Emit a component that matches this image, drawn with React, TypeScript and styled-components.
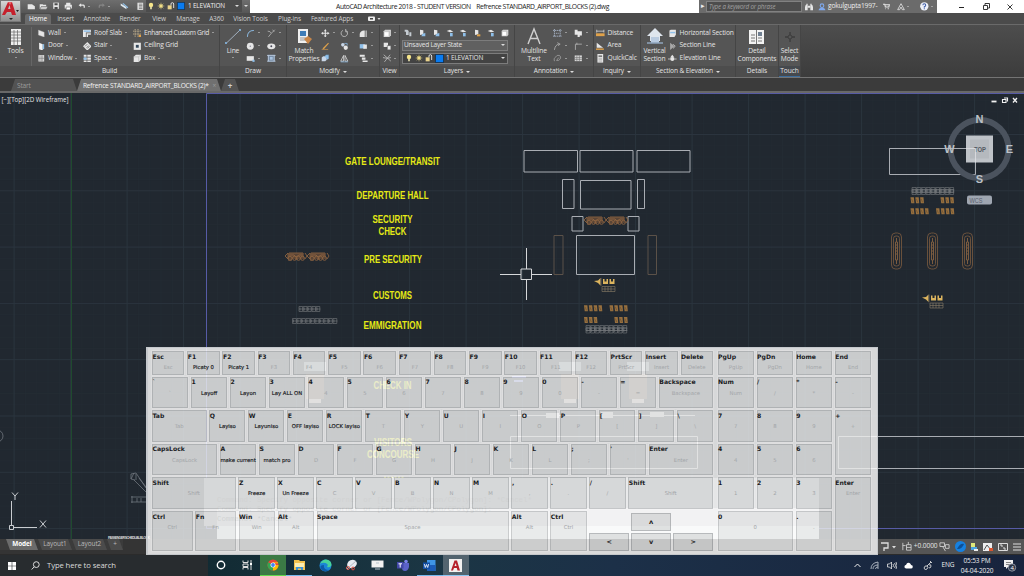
import React from "react";
import styled, { createGlobalStyle, css } from "styled-components";

const Global = createGlobalStyle`
  *{box-sizing:border-box}
  html,body{margin:0;padding:0;overflow:hidden;background:#212830}
  body{font-family:"Open Sans","Noto Sans",sans-serif;font-size:6.6px;color:#e4e4e4;line-height:1}
  svg{display:block;flex:none}
`;

/* ---------- icons ---------- */
const W = "#e6e6e6";
const B = "#8fc0ea";
const O = "#e0a24a";
const G = "#a8a8a8";
const glyphs: Record<string, React.ReactNode> = {
  new: <path d="M1 3h6l4 3v4H1z" fill={W} />,
  open: <><path d="M1 3h4l1 1h4v2H3l-2 4z" fill={W} /><path d="M3.5 6.5H12L10 10H1.5z" fill="#c9c9c9" /></>,
  save: <><path d="M2 1h9v10H2z" fill={W} /><path d="M4 2h5v3H4zM4 8h5v3H4z" fill="#4c4c4c" /></>,
  print: <><path d="M3 1h6v3H3zM1 4h10v5H1z" fill={W} /><path d="M3 7h6v4H3z" fill="#fff" stroke="#555" strokeWidth=".8" /></>,
  undo: <path d="M1 5l4-3v2h4q2 0 2 3v2H9V7q0-1-1-1H5v2z" fill={W} />,
  redo: <path d="M11 5L7 2v2H3Q1 4 1 7v2h2V7q0-1 1-1h3v2z" fill="#858585" />,
  sheets: <><path d="M1 2l8 5v3L1 5z" fill="#dfe8ee" /><path d="M4 2l7 6" stroke={B} strokeWidth="1.5" /></>,
  project: <><path d="M2 1h8v10H2z" fill={W} /><path d="M4 3h5M4 5h5M4 7h5M4 9h5" stroke="#666" /></>,
  bulb: <><circle cx="6" cy="4.5" r="3.3" fill="#f6e58a" /><path d="M4.7 7h2.6v4H4.7z" fill="#e4dca9" /></>,
  sun: <><circle cx="6" cy="6" r="2.6" fill="#f6e58a" /><path d="M6 1v10M1 6h10M2.5 2.5l7 7M9.5 2.5l-7 7" stroke="#f0dc86" strokeWidth=".8" /></>,
  lock: <><path d="M1 5h6v6H1z" fill="#e9d28b" /><path d="M6 5V3q0-2 2-2t2 2v6" fill="none" stroke={W} strokeWidth="1.4" /></>,
  blue: <path d="M.5.5h11v11H.5z" fill="#0a7bf0" stroke="#123" />,
  wall: <path d="M2 1.500l8 3v6.500L2 8.500z" fill={W} stroke="#bbb" strokeWidth=".5" />,
  door: <><path d="M3 1l5 2v9L3 10z" fill="#f4f4f4" /><path d="M8 3h2v7H8" fill={B} /></>,
  window: <><path d="M2 1.5h8v9H2z" fill={W} /><path d="M6 2v8M2 6h8M4 2v8M8 2v8" stroke="#777" strokeWidth=".8" /></>,
  roof: <><path d="M0 1h11v4H4v6H0z" fill="#e8e8e8" /><path d="M1 2h9v2H1z" fill={B} /><path d="M5 6h6v2H7v3H5z" fill={W} /></>,
  stair: <><path d="M6 0l6 6-6 6-6-6z" fill={W} /><path d="M3 6l3-3M5 8l3-3M6 9l3-3" stroke="#555" /></>,
  space: <><path d="M1 1h4v3H1zM1 5h4v3H1zM1 9h4v2H1zM6 1h5v3H6zM6 5h5v3H6zM6 9h5v2H6z" fill={W} /><path d="M1 5h4v3H1z" fill={B} /></>,
  grid: <><path d="M3 0v12M7 0v12M0 3h12M0 7h12" stroke="#d8c39a" strokeWidth="1" strokeDasharray="2 1" /><path d="M8 8h4v4H8z" fill={O} /></>,
  ceiling: <><path d="M1 1h10v10H1z" fill={W} /><path d="M4 4h4v4H4z" fill="#33485c" /></>,
  box: <><path d="M1 4l3-3h7v7l-3 3H1z" fill={W} /><path d="M8 4v7M8 4H1M8 4l3-3" stroke="#bbb" /></>,
  arc: <path d="M2 11Q2 2 11 2" fill="none" stroke={B} strokeWidth="1.3" />,
  trim: <path d="M1 3q4 0 5 3l-4 5M6 6l5-5M8 1l2 3" fill="none" stroke={G} strokeWidth="1.3" />,
  circle: <><circle cx="6" cy="6" r="4.8" fill={W} /><circle cx="6" cy="6" r="1" fill="#889" /></>,
  eye: <><ellipse cx="6" cy="6" rx="5.6" ry="4" fill={W} /><circle cx="6" cy="6" r="1.3" fill="#445" /></>,
  rect: <><path d="M1 3h10v6.500H1z" fill={W} /><path d="M9 8h3v3H9z" fill={B} /></>,
  hatch: <><path d="M1 1h10v10H1z" fill="#7288a0" /><path d="M2 2v8M10 2v8M0 2h12M0 10h12" stroke="#c9d7e8" /><path d="M4 4h4v4H4z" fill="#a9c3e0" /></>,
  move: <path d="M6 0l2 3H4zM6 12l2-3H4zM0 6l3-2v4zM12 6L9 4v4zM5.3 3h1.4v6H5.3zM3 5.3h6v1.4H3z" fill={W} />,
  erase: <><path d="M2 9l8-8 1 1-7 8z" fill={O} /><path d="M1 11h9" stroke={O} strokeWidth="1.2" /></>,
  copy: <><circle cx="4" cy="4" r="2.5" fill="#c9d7e8" /><circle cx="8" cy="8" r="3" fill={W} /><path d="M6 2h4v3" fill="none" stroke={B} /></>,
  cubes: <><path d="M1 5l2-2h5v5l-2 2H1z" fill="#c9d7e8" /><path d="M5 3l2-2h4v5L9 8" fill={B} stroke="#567" strokeWidth=".6" /></>,
  rotate: <path d="M8 2a4.500 4.500 0 11-4 0M8 0v4h3" fill="none" stroke="#b9b9b9" strokeWidth="1.3" />,
  fillet: <><path d="M1 11V7q1-5 6-5h1v9z" fill={W} /><path d="M9 2h2v9H9z" fill="#bbb" /></>,
  mirror: <><path d="M1 10L5 2v8zM7 10V2l4 8z" fill="none" stroke={W} /><path d="M1 11h10" stroke={B} /></>,
  stretch: <><path d="M1 3h7v6H1z" fill={B} /><path d="M6 3.500h5v6H6z" fill={W} /></>,
  array: <><path d="M1 1h7v3H1zM4 5h5v3H4zM5 9h7v2H5z" fill={W} /></>,
  view3d: <><path d="M1 3l2-2h8v8l-2 2H1z" fill="#dcdcdc" /><path d="M2.500 4.500h5v5h-5z" fill="#fff" /><path d="M9 3v8M1 3h8" stroke="#aaa" strokeWidth=".8" /></>,
  viewpair: <><path d="M1 1h6v6H1z" fill={W} /><path d="M6 5h5v6H6z" fill="#eee" stroke="#444" strokeWidth=".7" /></>,
  burst: <path d="M1 1l10 9M10 1L2 11M0 5l6 1M6 6l5-1" stroke="#c0c0c0" strokeWidth="1.100" />,
  lay1: <><path d="M1 1h4l2 2v6H3V4H1zM8 5h3v6H8z" fill="#c5ccd2" /></>,
  lay2: <><path d="M3 1l5 1v6l-5 1z" fill={W} /><path d="M7 7l4-1v5H5z" fill={B} /></>,
  lay3: <><path d="M1 3l5-2 5 3-5 1z" fill={W} /><path d="M6 6h4v5H6z" fill={B} /></>,
  lay4: <><path d="M3 1l5 1v6l-5 1z" fill={W} /><path d="M6 8h5v3H6z" fill={O} /></>,
  dim: <path d="M0 2h12M0 10h12M2 0v12M10 0v12M4 6h4" stroke="#a9b6c8" strokeWidth="1.2" strokeDasharray="2 .7" />,
  tag: <path d="M1 1h4v2h6v6H8v2H5V8H1z" fill={W} />,
  leader: <path d="M2 11Q3 4 8 3M6 1l4 2-3 2" fill="none" stroke={G} strokeWidth="1.3" />,
  corner: <path d="M2 11V3h9M4 1v3" fill="none" stroke={G} strokeWidth="1.3" />,
  cloud: <path d="M2 10q-2-4 2-6 1-3 5-2 3 2 1 5-2 3-5 2l3-4" fill="none" stroke={G} />,
  table: <><path d="M1 2h10v8H1z" fill="#d8d8d8" /><path d="M1 5h10M4 2v8M7.5 2v8M1 7.5h10" stroke="#666" strokeWidth=".8" /></>,
  dist: <><path d="M0 6h12v4H0z" fill={O} /><path d="M1 3h10" stroke={W} /><path d="M1 1v4M11 1v4" stroke={W} /></>,
  area: <><path d="M1 1l9 7H1z" fill={W} /><path d="M0 9h11v2H0z" fill={O} /></>,
  calc: <><path d="M2 0h8v12H2z" fill={W} /><path d="M3.500 2h5v2h-5z" fill="#666" /><path d="M3.500 6h5M3.500 8h5M3.500 10h5" stroke="#999" strokeWidth=".8" /></>,
  hsec: <><path d="M2 2l2-1h7v7l-2 3H2z" fill={W} /><path d="M3 5h7" stroke={B} strokeWidth="2" /></>,
  secline: <><path d="M3 1l6 5-6 5z" fill={G} /><path d="M7 3l3 3-3 3" fill="none" stroke={W} /></>,
  elev: <><path d="M0 7h12" stroke={W} /><circle cx="6" cy="7" r="2.800" fill={W} /><path d="M6 1l3 4H3z" fill={W} /></>,
  binoc: <><path d="M1 3h3v8H0V6zM8 3h3l1 3v5H8z" fill={W} /><path d="M4 4h4v3H4zM2 1h2v2H2zM8 1h2v2H8z" fill={W} /></>,
  user: <><circle cx="6" cy="4" r="2.700" fill="none" stroke="#7fa9ee" strokeWidth="1.600" /><path d="M1 11q0-4 5-4t5 4z" fill="#7fa9ee" /></>,
  cart: <path d="M0 2h3l1 5h6l1-4H4M4 10h1M8 10h2" fill="none" stroke={W} strokeWidth="1.800" />,
  a360: <path d="M6 1l5 9H8L6 6l-2 4H1z" fill="none" stroke={W} strokeWidth="1.200" />,
  help: <><circle cx="6" cy="6" r="5.800" fill="#eef1fa" /><path d="M4 4.500Q4 2.500 6 2.500t2 2Q8 6 6 6.500V8M6 8.800V10" fill="none" stroke="#3a5aa6" strokeWidth="1.400" /></>,
};

const Svg = ({ n, s = 8.6 }: { n: string; s?: number }) => (
  <svg width={s} height={s} viewBox="0 0 12 12">{glyphs[n]}</svg>
);
const Caret = styled.i<{ $s?: number; $off?: boolean }>`
  flex:none;width:0;height:0;
  border:${p => p.$s || 1.7}px solid transparent;
  border-top-color:${p => (p.$off ? "transparent" : "#dcdcdc")};border-bottom:0;
`;

/* ---------- page ---------- */
const Page = styled.div`
  position:relative;width:1024px;height:576px;overflow:hidden;
  display:flex;flex-direction:column;background:#3b3b3b;
`;
const Header = styled.header`display:grid;grid-template-columns:21px 1fr;height:24px;background:#4b4b4b;`;
const Logo = styled.div`
  height:22px;background:linear-gradient(#d6d6d6,#8f8f8f);border:1px solid #777;display:flex;align-items:center;justify-content:center;
`;
const TitleBar = styled.div`display:flex;height:13px;background:#fff;color:#222;`;
const Quick = styled.div`
  width:229px;display:flex;align-items:center;background:linear-gradient(#6e6e6e,#565656);padding:0 0 1px 4px;
`;
const Slot = styled.span<{ $w: number }>`width:${p => p.$w}px;flex:none;display:flex;align-items:center;justify-content:center;gap:2px;`;
const LayerPick = styled.div`
  display:flex;align-items:center;gap:2px;width:96px;height:12px;padding:0 3px 0 1px;background:#4c4c4c;color:#eee;
  font-size:6.4px;letter-spacing:-.17px;
  span{flex:1;white-space:nowrap;margin-left:1px}
`;
const Title = styled.div`flex:1;padding:1.5px 0 0 86px;font-size:6.8px;letter-spacing:-.4px;line-height:9px;white-space:pre;color:#1c1c1c;`;
const Account = styled.div`width:238px;display:flex;align-items:center;background:#6b6b6b;color:#ececec;font-size:6.7px;letter-spacing:-.2px;`;
const Search = styled.div`
  width:96px;height:11px;background:#4d4d4d;border:1px solid #818181;color:#a2a2a2;font-style:italic;font-size:6.2px;line-height:9px;padding-left:2px;
  letter-spacing:-.16px;white-space:nowrap;
`;
const WinBtns = styled.div`width:87px;display:flex;align-items:center;justify-content:space-between;padding:0 11px 0 22px;`;
const Menu = styled.nav`display:flex;align-items:flex-end;height:11px;padding-left:4px;`;
const MenuTab = styled.span<{ $w: number; $on?: boolean }>`
  width:${p => p.$w}px;text-align:center;height:10px;line-height:9px;white-space:nowrap;font-size:6.5px;letter-spacing:-.14px;
  color:${p => (p.$on ? "#fff" : "#cfcfcf")};
  ${p => p.$on && css`background:#6a6a6a;border-radius:2px 2px 0 0;`}
`;

const Ribbon = styled.div`display:flex;height:54px;background:linear-gradient(#4d4d4d,#3c3c3c);border-top:1px solid #6a6a6a;border-bottom:1px solid #747474;`;
const Panel = styled.section<{ $w: number; $blue?: boolean }>`
  width:${p => p.$w}px;flex:none;display:flex;flex-direction:column;background:#555;border-right:1px solid #454545;
  ${p => p.$blue && css`footer{border-bottom:1px solid #3c6c9b;background:#45494e}`}
`;
const PanelBody = styled.div<{ $pl?: number }>`height:41px;display:flex;padding:1.500px 0 0 ${p => p.$pl || 0}px;`;
const PanelName = styled.footer`
  height:11px;background:#4d4d4d;display:flex;align-items:center;justify-content:center;gap:3px;font-size:6.6px;letter-spacing:-.1px;white-space:nowrap;
`;
const Col = styled.div<{ $w: number; $ml?: number }>`width:${p => p.$w}px;margin-left:${p => p.$ml || 0}px;flex:none;display:flex;flex-direction:column;`;
const Cmd = styled.div<{ $tight?: boolean }>`
  height:12.9px;display:flex;align-items:center;gap:3px;white-space:nowrap;font-size:6.7px;letter-spacing:${p => (p.$tight ? -0.34 : -0.16)}px;
`;
const Big = styled.div<{ $w: number; $line?: boolean }>`
  width:${p => p.$w}px;flex:none;display:flex;flex-direction:column;align-items:center;text-align:center;
  font-size:6.7px;letter-spacing:-.13px;line-height:8px;white-space:pre;
  ${p => p.$line && css`border-right:1px solid #666;`}
  svg{margin-bottom:1.500px}
  i{margin-top:2px}
`;
const Combo = styled.div<{ $dark?: boolean }>`
  width:106px;height:11px;margin-bottom:2px;display:flex;align-items:center;gap:2px;padding:0 2px 0 ${p => (p.$dark ? 2 : 1)}px;background:${p => (p.$dark ? "#434343" : "#606060")};border:1px solid #7c7c7c;
  font-size:6.5px;letter-spacing:-.2px;white-space:nowrap;
  span{flex:1}
`;
const Line = styled.div`display:flex;height:13px;align-items:center;justify-content:space-between;padding:0 3px 0 2px;`;

const Files = styled.div`display:flex;height:15px;padding:1px 0 0 11px;background:#3b3b3b;border-bottom:2px solid #686868;`;
const FileTab = styled.div<{ $w: number; $on?: boolean }>`
  width:${p => p.$w}px;height:12px;line-height:11px;padding-left:6px;white-space:nowrap;display:flex;align-items:center;
  font-size:6.6px;letter-spacing:-.21px;
  clip-path:polygon(4px 0,calc(100% - 4px) 0,100% 100%,0 100%);
  background:${p => (p.$on ? "#707070" : "#535353")};color:${p => (p.$on ? "#f4f4f4" : "#9c9c9c")};
  b{margin-left:auto;margin-right:5px;font-weight:400;color:#999}
`;
const AddTab = styled(FileTab)`padding:0;justify-content:center;color:#d0d0d0;font-size:8px;font-weight:700;`;
const Drawing = styled.svg`width:1024px;height:446px;background:#212830;`;

const StatusBar = styled.div`display:flex;justify-content:space-between;height:16px;background:#343434;border-bottom:1px solid #2b2b2b;`;
const Sheets = styled.div`display:flex;height:11px;background:#3b3b3b;padding-left:6px;`;
const Sheet = styled.span<{ $w: number; $on?: boolean }>`
  width:${p => p.$w}px;text-align:center;line-height:10px;font-size:6.4px;letter-spacing:-.05px;
  clip-path:polygon(0 0,calc(100% - 4px) 0,100% 100%,4px 100%);
  background:${p => (p.$on ? "#6b6b6b" : "#4b4b4b")};color:${p => (p.$on ? "#fff" : "#b9b9b9")};font-weight:${p => (p.$on ? 700 : 400)};
`;
const StatusTools = styled.div`
  display:flex;align-items:center;height:15px;width:146px;background:#555;font-size:6.6px;letter-spacing:-.1px;
  svg{margin:0 auto}
`;

const Taskbar = styled.footer`display:flex;height:21px;background:linear-gradient(90deg,#122b33 20%,#1b3644 42%,#1c3048 60%,#18243d);color:#f0f0f0;`;
const SearchBox = styled.div`
  width:208px;display:flex;align-items:center;background:#282c2f;color:#dcdcdc;font-size:7.7px;letter-spacing:-.1px;padding-left:7px;
  svg:first-child{margin-right:14px}
  svg{margin-right:7px}
`;
const TaskIcon = styled.div<{ $bg?: string; $run?: string }>`
  width:26.1px;height:21px;display:flex;align-items:center;justify-content:center;
  background:${p => p.$bg || "transparent"};
  border-bottom:1px solid ${p => p.$run || "transparent"};
`;
const Tray = styled.div`
  margin-left:auto;display:flex;align-items:center;font-size:6.5px;letter-spacing:-.12px;
`;
const Clock = styled.p`margin:0 0 0 2px;width:36px;text-align:center;line-height:9.5px;white-space:nowrap;`;

/* ---------- on-screen keyboard ---------- */
const Keyboard = styled.div`
  position:absolute;left:146px;top:347px;width:732px;height:208px;display:flex;gap:4.5px;
  background:rgba(255,255,255,.82);border:1px solid rgba(190,194,198,.7);border-left-width:2px;
  padding:3px 5px 3px 4px;font-family:"DejaVu Sans",sans-serif;
`;
const Rows = styled.div`width:561px;display:grid;grid-template-rows:23.7px repeat(4,31.6px) 40px;gap:2px;`;
const Row = styled.div`display:flex;gap:2.8px;`;
const Pad = styled.div`
  display:grid;grid-template-columns:repeat(4,36.5px);grid-template-rows:23.7px repeat(4,31.6px) 40px;gap:2px 2.6px;
`;
const KeyCap = styled.div<{ $w?: number; $area?: string; $used?: boolean }>`
  ${p => (p.$w ? css`width:${p.$w}px;flex:none;` : css`flex:1 1 0;min-width:0;`)}
  ${p => p.$area && css`grid-area:${p.$area};`}
  background:rgba(20,25,30,.065);border:1px solid rgba(60,64,70,.18);border-width:1px 1.5px 1.5px 1px;
  box-shadow:0 0 0 .7px rgba(255,255,255,.25);
  white-space:nowrap;
  b{display:block;font-size:6.1px;line-height:8px;height:11px;color:#191b1e;padding-top:.5px;margin-left:-.500px}
  span{
    display:flex;justify-content:center;font-size:5.3px;line-height:8px;margin:0 -3px;
    color:${p => (p.$used ? "#15171a" : "#a2a5a8")};
    ${p => p.$used && css`-webkit-text-stroke:.15px #15171a;`}
  }
`;
const Arrows = styled.div`
  flex:1;display:grid;grid-template-columns:repeat(3,1fr);grid-template-rows:17.5px 18px;gap:2.5px;padding-top:2px;
`;
const ArrowKey = styled.div<{ $c: string }>`
  grid-area:${p => p.$c};display:flex;align-items:center;justify-content:center;font-weight:700;font-size:6.500px;color:#222;
  background:rgba(20,25,30,.11);border:1px solid rgba(60,64,70,.24);
`;

type K = [string, number?, string?, string?];
const Key = ({ k }: { k: K }) => (
  <KeyCap $w={k[1] || undefined} $used={!!k[2]} $area={k[3]}>
    <b>{k[0]}</b>
    <span>{k[2] || k[0]}</span>
  </KeyCap>
);
const S = 36.2;
const keyRows: K[][] = [
  [["Esc"], ["F1", 0, "Picaty 0"], ["F2", 0, "Picaty 1"], ["F3"], ["F4"], ["F5"], ["F6"], ["F7"], ["F8"], ["F9"], ["F10"], ["F11"], ["F12"], ["PrtScr"], ["Insert"], ["Delete"]],
  [["`", S], ["1", S, "Layoff"], ["2", S, "Layon"], ["3", S, "Lay ALL ON"], ["4", S], ["5", S], ["6", S], ["7", S], ["8", S], ["9", S], ["0", S], ["-", S], ["=", S], ["Backspace"]],
  [["Tab", 54.5], ["Q", S, "Layiso"], ["W", S, "Layuniso"], ["E", S, "OFF layiso"], ["R", S, "LOCK layiso"], ["T", S], ["Y", S], ["U", S], ["I", S], ["O", S], ["P", S], ["[", S], ["]", S], ["\\"]],
  [["CapsLock", 65.2], ["A", S, "make current"], ["S", S, "match pro"], ["D", S], ["F", S], ["G", S], ["H", S], ["J", S], ["K", S], ["L", S], [";", S], ["'", S], ["Enter"]],
  [["Shift", 83.7], ["Z", S, "Freeze"], ["X", S, "Un Freeze"], ["C", S], ["V", S], ["B", S], ["N", S], ["M", S], [",", S], [".", S], ["/", S], ["Shift"]],
];
const padKeys: K[] = [
  ["PgUp", 0, "", "1/1"], ["PgDn", 0, "", "1/2"], ["Home", 0, "", "1/3"], ["End", 0, "", "1/4"],
  ["Num", 0, "", "2/1"], ["/", 0, "", "2/2"], ["*", 0, "", "2/3"], ["-", 0, "", "2/4"],
  ["7", 0, "", "3/1"], ["8", 0, "", "3/2"], ["9", 0, "", "3/3"], ["+", 0, "", "3/4/5/5"],
  ["4", 0, "", "4/1"], ["5", 0, "", "4/2"], ["6", 0, "", "4/3"],
  ["1", 0, "", "5/1"], ["2", 0, "", "5/2"], ["3", 0, "", "5/3"], ["Enter", 0, "", "5/4/7/5"],
  ["0", 0, "", "6/1/7/3"], [".", 0, "", "6/3"],
];

/* ---------- CAD drawing ---------- */
const Note = ({ x, y, w, children }: { x: number; y: number; w: number; children: string }) => (
  <text x={x - w / 2} y={y + 3.5} textLength={w} lengthAdjust="spacingAndGlyphs" fontFamily="Liberation Sans" fontWeight="700" fontSize="10.3" fill="#e6ea16">{children}</text>
);
const range = (n: number) => Array.from({ length: n }, (_, i) => i);
const Seats = ({ x, y }: { x: number; y: number }) => (
  <g stroke="#8c6341" strokeWidth=".9" fill="none" transform={`translate(${x} ${y})`}>
    {[0, 22].map(d => (
      <g key={d} transform={`translate(${d} 0)`}>
        <path d="M3 1h16v6H3z" fill="#5a4536" stroke="none" />
        <path d="M0 4l3-3v6zM4 1h14M20 1l2 3-2 3M3 8h4M10 7h3" />
        {[5, 9.500, 13.500, 17.500].map(c => <circle key={c} cx={c} cy="6.300" r="2" />)}
        <path d="M4 3h5l2 2 3-2h4" strokeWidth="1" />
      </g>
    ))}
  </g>
);
const Desks = ({ x, y, n, w = 4.3 }: { x: number; y: number; n: number; w?: number }) => (
  <g fill="none" stroke="#777b7e" strokeWidth=".6" transform={`translate(${x} ${y})`}>
    {range(n).map(i => <path key={i} d={`M${i * w} 0h${w - 0.7}v5h-${w - 0.7}zM${i * w + 1} 1v3M${i * w} 2.5h${w}`} />)}
  </g>
);
const Benches = ({ xs, y }: { xs: number[]; y: number }) => (
  <g>
    {xs.map(x => <g key={x}><path d={`M${x - 0.5} ${y}h3.400l.5 6h-3.200z`} fill="#98703f" /><path d={`M${x + 0.5} ${y + 1.500}l1.500 3.500`} stroke="#6d522f" strokeWidth=".7" /></g>)}
  </g>
);
const Counter = ({ x, y }: { x: number; y: number }) => (
  <g transform={`translate(${x} ${y})`}>
    <path d="M0 3l4-.5 2.500-2.500v7.500L4 5zM9 1v5h5V1h-1.500v2.500h-2V1zM15.500 1v5h5V1H19v2.500h-2V1z" fill="#dcb45e" />
    <path d="M7 0v8M8 8.500h13v5H8zM8 11h13M11 8.500v5M14 8.500v5M17 8.500v5" stroke="#8c7d68" strokeWidth=".6" fill="none" />
  </g>
);
const Carousel = ({ x, y }: { x: number; y: number }) => (
  <g fill="none" stroke="#7c5c40" strokeWidth=".8" transform={`translate(${x} ${y})`}>
    <rect x="0" y="0" width="10" height="36" rx="4" />
    <rect x="2" y="3" width="6" height="30" rx="2.5" />
    <path d="M4 9h2v18H4zM3.500 12h3M3.500 15h3M3.500 18h3M3.500 21h3M5 5v4M5 27v4" strokeWidth="1" />
  </g>
);
const cmdText = ["Command: Specify opposite corner or [Fence/WPolygon/CPolygon]: *Cancel*", "Command: Specify opposite corner or [Fence/WPolygon/CPolygon]:", "Command: *Cancel*"];

const Cad = () => (
  <Drawing viewBox="0 93 1024 446">
    <g stroke="#262e37" strokeWidth=".5">
      {range(91).map(i => <path key={i} d={`M${14.1 + i * 11.3} 93V539`} />)}
      {range(40).map(i => <path key={i} d={`M0 ${100.7 + i * 11.26}H1024`} />)}
    </g>
    <g stroke="#2b343e" strokeWidth="1">
      {range(18).map(i => <path key={i} d={`M${14.1 + i * 56.5} 93V539`} />)}
      {range(8).map(i => <path key={i} d={`M0 ${134.5 + i * 56.3}H1024`} />)}
    </g>
    <path d="M71.5 93v446" stroke="#1f4a2e" />
    <path d="M206.5 528.5V93.5H1024M206.5 528.5H1024" fill="none" stroke="#575ba6" />
    <text x="1.500" y="102" fontFamily="Open Sans" fontSize="6.700" fill="#e6e6e6" textLength="67" lengthAdjust="spacingAndGlyphs">[−][Top][2D Wireframe]</text>

    <Note x={392.5} y={161} w={95}>GATE LOUNGE/TRANSIT</Note>
    <Note x={392.5} y={195} w={72}>DEPARTURE HALL</Note>
    <Note x={392.5} y={219.5} w={40}>SECURITY</Note>
    <Note x={392.5} y={231.5} w={28}>CHECK</Note>
    <Note x={393} y={259} w={58}>PRE SECURITY</Note>
    <Note x={392.5} y={295.5} w={39}>CUSTOMS</Note>
    <Note x={392.5} y={325.5} w={58}>EMMIGRATION</Note>
    <Note x={392.5} y={385.5} w={38}>CHECK IN</Note>
    <Note x={393} y={442.5} w={38}>VISITORS</Note>
    <Note x={393} y={454.5} w={52}>CONCOURSE</Note>
    <path d="M384 477.500h20" stroke="#e6ea16" strokeWidth="1.500" strokeDasharray="2 1.500" />

    <g fill="none" stroke="#a9adb3" strokeWidth="1">
      <path d="M524 150.5h53.500v21.500H524zM580 150.5h53v21.500h-53zM637 150.5h53v21.500h-53z" />
      <path d="M562.5 179.5h11.500v29h-11.500zM580.5 180.5h50.500v28.500h-50.500zM637.5 179.5h7v29h-7z" />
      <path d="M572 216.5h11v14.500h-11zM628 216.5h11v14.500h-11zM576.5 235.5h58v39h-58z" />
      <path d="M889.5 148.5h86v26h-86z" />
      <path d="M510.5 436.5h187v32h-187zM1024 436.5H838.5v32H1024M510 415.5h185" />
    </g>
    <path d="M554 235.5h9v39h-9zM648 235.5h8.500v39H648z" fill="none" stroke="#5b5148" />
    <Seats x={584} y={216} />
    <Seats x={285} y={252} />
    <Desks x={299} y={306.5} n={5} />
    <Desks x={292.5} y={318.5} n={10} w={4.5} />
    <Counter x={594} y={278} />
    <Benches xs={[584.5, 589.3, 594.1, 598.9, 610, 614.8, 619.6, 624.4]} y={305.3} />
    <Benches xs={[584.5, 589.3, 594.1, 614.8, 619.6, 624.4]} y={317} />
    <Desks x={586} y={325.5} n={9} w={4.6} />
    <Desks x={586} y={328} n={9} w={4.6} />
    <Desks x={912} y={187.5} n={9} w={4.7} />
    <Desks x={912} y={189.5} n={9} w={4.7} />
    <Benches xs={[911, 915.8, 920.6, 941, 945.8, 950.6]} y={197.3} />
    <Benches xs={[911, 915.8, 920.6, 925.4, 936.5, 941.3, 946.1, 950.9]} y={208.3} />
    <Carousel x={891.5} y={233} />
    <Carousel x={927.5} y={233} />
    <Carousel x={962.5} y={233} />
    <Counter x={922} y={294.5} />
    {[306, 561, 629].map(x => (
      <g key={x}>
        <path d={`M${x - 2} 362h22v9h-22z`} fill="#7d8389" />
        <path d={`M${x} 374h18v25h-18z`} fill="#57433a" />
        <path d={`M${x + 3} 399h12v4h-12z`} fill="#a9a09a" />
      </g>
    ))}
    <path d="M512 377h14M514 381h9" stroke="#7b86d8" strokeWidth="2" />
    <path d="M546 413h13v5h-13zM601 412h12v6h-12zM650 412h14v5h-14z" fill="#a9adb2" />

    <g fill="none" stroke="#70767d" strokeWidth=".8">
      <path d="M131 474l5-1 10 15M131 479l3-6M134 480l12 12M131 497h15M131 502h15M132 496v7M136 474v6M131 474v5l4 1M139 478l7 9M137 498v4M141 498v4" />
      <circle cx="-3" cy="436" r="6" />
    </g>
    <text x="108" y="539" fontFamily="Liberation Sans" fontSize="3.600" fontWeight="700" fill="#d8d8d8" textLength="42">PASSENGER SCHEDUAL BLOCK</text>

    <g fill="none" stroke="#c9ccd0">
      <path d="M11.500 525V501M14 527.500h23M9.500 525.500h4v4h-4z" />
      <path d="M12 492.500l3 3.500 3-3.500M15 496v4M40 520.500l6 7M46 520.500l-6 7" />
    </g>

    <path d="M526.5 248v21M526.5 280v20M500 274.5h21M532 274.5h20M521 269h10.500v10.500H521z" fill="none" stroke="#d6d8da" />

    <g>
      <circle cx="979.5" cy="149" r="29" fill="none" stroke="#4b535e" strokeWidth="6" />
      <path d="M889.5 148.5h86v26" fill="none" stroke="#a9adb3" />
      <path d="M966 135.5h27v27h-27z" fill="#bfc3c8" />
      <path d="M970 139.5h19v19h-19z" fill="#b5b9be" />
      <text x="974" y="151.5" fontFamily="Liberation Sans" fontSize="7" fontWeight="700" fill="#545a62" textLength="12" lengthAdjust="spacingAndGlyphs">TOP</text>
      <path d="M966 148.5h9.500v14" fill="none" stroke="#dfe1e4" strokeWidth=".8" />
      <g fontFamily="Liberation Sans" fontSize="11" fontWeight="700" fill="#bcc1c6" textAnchor="middle">
        <text x="979.5" y="123">N</text><text x="979.5" y="183">S</text><text x="949.5" y="153">W</text><text x="1009.5" y="153">E</text>
      </g>
      <rect x="967" y="195.5" width="25" height="9" rx="2" fill="#9fa6b1" />
      <text x="969.5" y="202.5" fontFamily="Liberation Sans" fontSize="6.500" fill="#59616e" textLength="13" lengthAdjust="spacingAndGlyphs">WCS</text>
    </g>
    <g stroke="#f1f1f1" fill="none">
      <path d="M991.5 101.5h5" strokeWidth="1.800" />
      <path d="M1002.500 99.500h3.500v3h-3.500zM1004 98h3.500v3.500" strokeWidth="1.100" />
      <path d="M1013 98l4 4.500M1017 98l-4 4.500" strokeWidth="1.300" />
    </g>

    <path d="M204 478h615v48H204z" fill="#6f7479" />
    <path d="M204 508h615v18H204z" fill="#83878c" />
    <path d="M217 508h602v31H217z" fill="#b4b7ba" />
    <path d="M217 526h602v13H217z" fill="#dfe1e3" />
    <g fontFamily="Liberation Mono" fontSize="7.400" fill="#4a4e53">
      {cmdText.map((t, i) => <text key={i} x="217" y={501.500 + i * 9.500}>{t}</text>)}
    </g>
  </Drawing>
);

const cell = (n: string) => <Cmd key={n}><Svg n={n} /><Caret /></Cmd>;

const menus: [string, number][] = [["Home", 26], ["Insert", 29], ["Annotate", 34], ["Render", 32], ["View", 26], ["Manage", 32], ["A360", 25], ["Vision Tools", 43], ["Plug-ins", 35], ["Featured Apps", 50]];

export default function App() {
  return (
    <Page>
      <Global />
      <Header>
        <Logo>
          <svg width="19" height="20" viewBox="0 0 19 20">
            <path d="M1 14L7 1h4l4 13h-4l-1-3H6l-2 3zM7 8h2.500L8.500 4z" fill="#c5202c" fillRule="evenodd" />
            <path d="M7 1l4 0-2 3z" fill="#e8656b" /><path d="M15 9h3l-1.500 2zM8 17h4l-2 2z" fill="#222" />
          </svg>
        </Logo>
        <div>
          <TitleBar>
            <Quick>
              <Slot $w={12}><Svg n="new" /></Slot><Slot $w={13}><Svg n="open" /></Slot><Slot $w={12}><Svg n="save" s={7.5} /></Slot>
              <Slot $w={13}><Svg n="print" /></Slot><Slot $w={18}><Svg n="undo" s={7.5} /><Caret /></Slot><Slot $w={22}><Svg n="redo" s={7.5} /><Caret /></Slot>
              <Slot $w={19}><Svg n="sheets" /></Slot><Slot $w={12}><Svg n="project" /></Slot>
              <LayerPick><Svg n="bulb" s={8} /><Svg n="sun" s={8} /><Svg n="lock" s={8} /><Svg n="blue" s={8} /><span>1 ELEVATION</span><Caret $s={2} /></LayerPick>
              <Slot $w={8}><Caret $s={2} /></Slot>
            </Quick>
            <Title>{"AutoCAD Architecture 2018 - STUDENT VERSION    Refrence STANDARD_AIRPORT_BLOCKS (2).dwg"}</Title>
            <Account>
              <Slot $w={7}>▸</Slot><Search>Type a keyword or phrase</Search>
              <Slot $w={13}><Svg n="binoc" s={8} /></Slot><Slot $w={13}><Svg n="user" s={8} /></Slot><span>gokulgupta1997-</span>
              <Slot $w={18}><Svg n="cart" s={7} /></Slot><Slot $w={16}><Svg n="a360" s={8} /><Caret /></Slot>
              <Slot $w={5} /><Slot $w={20}><Svg n="help" /><Caret /></Slot>
            </Account>
            <WinBtns>
              <svg width="6" height="6"><path d="M0 3.500h5" stroke="#222" /></svg>
              <svg width="7" height="7"><path d="M.5 2.500h4v4h-4zM2 2V.5h4.500V5H5" fill="none" stroke="#222" strokeWidth=".9" /></svg>
              <svg width="6" height="6"><path d="M.5.500l5 5M5.500.500l-5 5" stroke="#222" strokeWidth=".9" /></svg>
            </WinBtns>
          </TitleBar>
          <Menu>
            {menus.map(([t, w], i) => <MenuTab key={t} $w={w} $on={i === 0}>{t}</MenuTab>)}
            <svg width="28" height="10"><rect x="11" y="2.500" width="7" height="4.500" rx="1" fill="#eee" /><path d="M13 4h3v1.500h-3z" fill="#444" /><path d="M20.500 4h3L22 6z" fill="#ddd" /></svg>
          </Menu>
        </div>
      </Header>

      <Ribbon>
        <Panel $w={220}>
          <PanelBody>
            <Big $w={32} $line>
              <svg width="14" height="19" viewBox="0 0 14 19"><path d="M2 2h10v16H2z" fill="#eee" /><path d="M2 5h10M2 8h10M2 11h10M2 14h10M5 3v15M8.500 3v15" stroke="#666" strokeWidth=".7" /></svg>
              Tools<Caret />
            </Big>
            <Col $w={46} $ml={4.500}>
              <Cmd><Svg n="wall" />Wall <Caret /></Cmd><Cmd><Svg n="door" />Door <Caret /></Cmd><Cmd><Svg n="window" />Window <Caret /></Cmd>
            </Col>
            <Col $w={50}>
              <Cmd><Svg n="roof" />Roof Slab <Caret /></Cmd><Cmd><Svg n="stair" />Stair <Caret /></Cmd><Cmd><Svg n="space" />Space <Caret /></Cmd>
            </Col>
            <Col $w={86}>
              <Cmd $tight><Svg n="grid" />Enhanced Custom Grid <Caret /></Cmd><Cmd><Svg n="ceiling" />Ceiling Grid</Cmd><Cmd><Svg n="box" />Box <Caret /></Cmd>
            </Col>
          </PanelBody>
          <PanelName>Build</PanelName>
        </Panel>
        <Panel $w={67}>
          <PanelBody>
            <Big $w={26}>
              <svg width="18" height="19" viewBox="0 0 18 19"><path d="M2.500 16L16 3" stroke="#a9b9c9" strokeWidth=".9" /><path d="M1 15h2v2H1zM15 2h2v2h-2z" fill="#7ea8cc" /></svg>
              Line<Caret />
            </Big>
            <Col $w={21}>{["arc", "circle", "rect"].map(cell)}</Col>
            <Col $w={19}>{["trim", "eye", "hatch"].map(cell)}</Col>
          </PanelBody>
          <PanelName>Draw</PanelName>
        </Panel>
        <Panel $w={93}>
          <PanelBody>
            <Big $w={34}>
              <svg width="18" height="19" viewBox="0 0 18 19"><path d="M3 2h10v14H3z" fill="#f0f0f0" /><path d="M5 4h6v5H5z" fill="#3f7db8" /><path d="M5 11h6M5 13h6" stroke="#999" /><path d="M9 12l4-3 4 3-4 5z" fill="#c8864a" /></svg>
              {"Match\nProperties"}
            </Big>
            <Col $w={19}><Cmd><Svg n="move" /><Caret /></Cmd><Cmd><Svg n="erase" /></Cmd><Cmd><Svg n="cubes" /></Cmd></Col>
            <Col $w={20}><Cmd><Svg n="rotate" /><Caret /></Cmd><Cmd $tight><Svg n="copy" /></Cmd><Cmd><Svg n="mirror" /></Cmd></Col>
            <Col $w={18} $ml={-1}>{["fillet", "stretch", "array"].map(cell)}</Col>
          </PanelBody>
          <PanelName>Modify <Caret $s={2.2} /></PanelName>
        </Panel>
        <Panel $w={20}>
          <PanelBody $pl={2.5}><Col $w={17}>{["view3d", "viewpair", "burst"].map(cell)}</Col></PanelBody>
          <PanelName>View</PanelName>
        </Panel>
        <Panel $w={115}>
          <PanelBody $pl={2}>
            <Col $w={110}>
              <Line>{["lay1", "lay2", "lay2", "lay3", "lay3", "lay4", "lay3", "view3d"].map((n, i) => <Svg key={i} n={n} s={8} />)}</Line>
              <Combo><span>Unsaved Layer State</span><Caret $s={2.2} /></Combo>
              <Combo $dark><Svg n="bulb" s={8} /><Svg n="sun" s={8} /><Svg n="lock" s={8} /><Svg n="blue" s={9} /><span>1 ELEVATION</span><Caret $s={2.2} /></Combo>
            </Col>
          </PanelBody>
          <PanelName>Layers <Caret $s={2.2} /></PanelName>
        </Panel>
        <Panel $w={79}>
          <PanelBody>
            <Big $w={38}>
              <svg width="16" height="19" viewBox="0 0 16 19"><path d="M2 17L8 2l6 15M4.500 11.500h7" fill="none" stroke="#d0d0d0" strokeWidth="1.400" /></svg>
              {"Multiline\nText"}
            </Big>
            <Col $w={21}>{["dim", "leader", "cloud"].map(cell)}</Col>
            <Col $w={19}>{["tag", "corner", "table"].map(cell)}</Col>
          </PanelBody>
          <PanelName>Annotation <Caret $s={2.2} /></PanelName>
        </Panel>
        <Panel $w={47}>
          <PanelBody $pl={2}>
            <Col $w={44}><Cmd><Svg n="dist" />Distance</Cmd><Cmd><Svg n="area" />Area</Cmd><Cmd><Svg n="calc" />QuickCalc</Cmd></Col>
          </PanelBody>
          <PanelName>Inquiry <Caret $s={2.2} /></PanelName>
        </Panel>
        <Panel $w={95}>
          <PanelBody>
            <Big $w={27}>
              <svg width="18" height="19" viewBox="0 0 18 19"><path d="M9 1l8 8h-3v5H4V9H1z" fill="#dfe6ee" /><path d="M5 10h8v6H5z" fill="#b9cbe0" /><path d="M1 16h16" stroke="#8fa5bd" strokeWidth="1.500" /></svg>
              {"Vertical\nSection"}
            </Big>
            <Col $w={67}><Cmd><Svg n="hsec" />Horizontal Section</Cmd><Cmd><Svg n="secline" />Section Line</Cmd><Cmd><Svg n="elev" />Elevation Line</Cmd></Col>
          </PanelBody>
          <PanelName>{"Section & Elevation"} <Caret $s={2.2} /></PanelName>
        </Panel>
        <Panel $w={43}>
          <PanelBody>
            <Big $w={42}>
              <svg width="18" height="19" viewBox="0 0 18 19"><path d="M1 3h15v14H1z" fill="#f3f3f3" /><path d="M8.500 3v14M3 8h4M3 11h4M3 14h4M10 11h4M10 14h4" stroke="#777" /><path d="M10 5h4v4h-4z" fill="#6f7f91" /></svg>
              {"Detail\nComponents"}
            </Big>
          </PanelBody>
          <PanelName>Details</PanelName>
        </Panel>
        <Panel $w={22} $blue>
          <PanelBody>
            <Big $w={21}>
              <svg width="14" height="19" viewBox="0 0 14 19"><path d="M7 5v10M2 10h10" stroke="#3d3d3d" strokeWidth="1.400" /><circle cx="7" cy="10" r="2" fill="#555" stroke="#3d3d3d" /></svg>
              {"Select\nMode"}
            </Big>
          </PanelBody>
          <PanelName>Touch</PanelName>
        </Panel>
      </Ribbon>

      <Files>
        <FileTab $w={66}>Start</FileTab>
        <FileTab $w={144} $on>Refrence STANDARD_AIRPORT_BLOCKS (2)*<b>×</b></FileTab>
        <AddTab $w={18}>+</AddTab>
      </Files>

      <Cad />

      <StatusBar>
        <Sheets>
          <Sheet $w={32} $on>Model</Sheet><Sheet $w={34}>Layout1</Sheet><Sheet $w={35}>Layout2</Sheet><Sheet $w={16}>+</Sheet>
        </Sheets>
        <StatusTools>
          <svg width="18" height="12" viewBox="0 0 18 12"><path d="M1 2h7v5H4v3" fill="none" stroke="#ddd" strokeWidth="1.300" /><path d="M12 5h4l-2 2.500z" fill="#ddd" /></svg>
          <svg width="11" height="11" viewBox="0 0 12 12"><path d="M2 2v8M2 5h3M6 4h5v6H6zM6 7h5M8 4V1" fill="none" stroke="#ccc" /></svg>
          +0.0000
          <svg width="11" height="11" viewBox="0 0 12 12"><path d="M1 2h5v4H1zM7 4h4v4H7zM4 6l3 5" fill="none" stroke="#ccc" /></svg>
          <svg width="13" height="13" viewBox="0 0 13 13"><circle cx="6.500" cy="6.500" r="5.500" fill="#1681e0" /><path d="M3 9q3-6 7-5-2 5-6 5" fill="#0d4f96" /></svg>
          <svg width="9" height="10" viewBox="0 0 9 10"><path d="M1 1h4v4H1z" fill="#dfe87a" /><path d="M1 5h6v3H1z" fill="#4aa3e0" /><path d="M4 7h4v2H4z" fill="#eee" /></svg>
          <svg width="11" height="10" viewBox="0 0 11 10"><path d="M1 1h9v8H1z" fill="#eee" /><path d="M2 8l3-5 4 5" fill="none" stroke="#555" /><path d="M7 6h4v3H7z" fill="#d8542f" /></svg>
          <svg width="12" height="10" viewBox="0 0 12 10"><path d="M1.500 1.500h9v7h-9zM3 3h2v2M9 7H7V5" fill="none" stroke="#ddd" /></svg>
          <svg width="10" height="10" viewBox="0 0 10 10"><path d="M1 2h8M1 5h8M1 8h8" stroke="#ddd" strokeWidth="1.200" /></svg>
        </StatusTools>
      </StatusBar>

      <Taskbar>
        <SearchBox>
          <svg width="10" height="10" viewBox="0 0 10 10"><path d="M1 1h3.700v3.700H1zM5.300 1H9v3.700H5.300zM1 5.300h3.700V9H1zM5.300 5.300H9V9H5.300z" fill="#fff" /></svg>
          <svg width="9" height="9" viewBox="0 0 9 9"><circle cx="5.300" cy="3.600" r="2.900" fill="none" stroke="#ddd" /><path d="M3.200 5.800L.7 8.500" stroke="#ddd" /></svg>
          Type here to search
        </SearchBox>
        <TaskIcon><svg width="10" height="10"><circle cx="5" cy="5" r="3.700" fill="none" stroke="#fff" strokeWidth="1.400" /></svg></TaskIcon>
        <TaskIcon><svg width="11" height="10"><path d="M1 .5v2h5v-2M1 9.500v-2h5v2M1 4h5v2.500H1zM9 0v10" fill="none" stroke="#ddd" /><path d="M8 3h2v2H8z" fill="#fff" /></svg></TaskIcon>
        <TaskIcon $bg="#3b7a45" $run="#62d84e">
          <svg width="12" height="12" viewBox="0 0 12 12"><circle cx="6" cy="6" r="5.500" fill="#e8453a" /><path d="M6 6L1.300 3.200A5.500 5.500 0 006 11.500z" fill="#34a853" /><path d="M6 6h5.500A5.500 5.500 0 016 11.500z" fill="#fbbc05" /><path d="M11 3.800H6" stroke="#fbbc05" strokeWidth="1" /><circle cx="6" cy="6" r="2.500" fill="#fff" /><circle cx="6" cy="6" r="1.900" fill="#4285f4" /></svg>
        </TaskIcon>
        <TaskIcon $run="#76b9ed">
          <svg width="13" height="12" viewBox="0 0 13 12"><path d="M1 1h5l1 1h5v9H1z" fill="#f2c14e" /><path d="M2 4h9v4H2z" fill="#fdeeb2" /><path d="M3 8h7v3H8V9.500H5V11H3z" fill="#3d94d6" /></svg>
        </TaskIcon>
        <TaskIcon>
          <svg width="13" height="13" viewBox="0 0 13 13"><circle cx="6.500" cy="6.500" r="6" fill="#1b86d6" /><path d="M1 5Q3 .5 7 .5q5 .5 5.500 5Q12 9 8 8q2-3-1.500-4T1 5z" fill="#48d39a" /><path d="M5 6q-1 5 5 5-5 3-8-1-2-4 3-4z" fill="#0d5aa8" /></svg>
        </TaskIcon>
        <TaskIcon>
          <svg width="13" height="12" viewBox="0 0 13 12"><ellipse cx="7" cy="5" rx="5" ry="4" fill="#e8ecf2" transform="rotate(-25 7 5)" /><path d="M2 10l9-8" stroke="#b3bac3" /><circle cx="3" cy="9" r="1.500" fill="none" stroke="#e0665c" /><circle cx="8" cy="9.500" r="1.400" fill="none" stroke="#e04a3d" /></svg>
        </TaskIcon>
        <TaskIcon><svg width="13" height="10" viewBox="0 0 13 10"><path d="M.5.500h12v7H.5z" fill="#f2f2f2" /><path d="M4 9h5M5 3h3" stroke="#b7c3cb" /></svg></TaskIcon>
        <TaskIcon>
          <svg width="13" height="12" viewBox="0 0 13 12"><circle cx="9" cy="2.500" r="1.800" fill="#7b83eb" /><path d="M5 4h7v4q-1 4-4 4t-3-3z" fill="#5b62c8" /><path d="M0 3h6.500v6.500H0z" fill="#4348a8" /><path d="M1.500 4.800h3.500M3.200 5v3.500" stroke="#fff" /></svg>
        </TaskIcon>
        <TaskIcon $run="#76b9ed">
          <svg width="13" height="11" viewBox="0 0 13 11"><path d="M4 0h8.500v11H4z" fill="#3f95e6" /><path d="M4 5h8.500v6H4z" fill="#1c5cb8" /><path d="M0 2.500h7v6.500H0z" fill="#1450a4" /><path d="M1.300 4l1 3.500 1.200-3 1.200 3 1-3.500" fill="none" stroke="#fff" strokeWidth=".8" /></svg>
        </TaskIcon>
        <TaskIcon $bg="#53646f" $run="#8cc6f2">
          <svg width="13" height="13" viewBox="0 0 13 13"><path d="M0 0h13v13H0z" fill="#f2f0ef" /><path d="M2 11.500L5.500 1.500h2.500l3 10H8.500L7.800 9H5l-1 2.500zM5.500 7h2L6.800 4z" fill="#b6202a" fillRule="evenodd" /></svg>
        </TaskIcon>
        <Tray>
          <Slot $w={17}><svg width="7" height="5"><path d="M.5 4l3-3 3 3" fill="none" stroke="#eee" /></svg></Slot>
          <Slot $w={17}><svg width="9" height="9"><path d="M1 8Q1 2 8 1M3 8q0-4 5-4M5.500 8q0-2 2.500-2M8 1v7" fill="none" stroke="#b4bcc6" strokeWidth=".9" /></svg></Slot>
          <Slot $w={17}><svg width="10" height="9"><path d="M.5 3v3h2L4.500 8V1l-2 2zM6 3q1 1.500 0 3M7.500 2q2 2.500 0 5M9 1q2 3.500 0 7" fill="none" stroke="#e6e6e6" strokeWidth=".8" /></svg></Slot>
          <Slot $w={17}><svg width="9" height="7"><path d="M2 6.500Q0 6 .5 4 1 3 2 3q1-3 3.500-2Q7 2 7 3q2 0 1.800 2Q8.500 6.500 7 6.500z" fill="#fff" /></svg></Slot>
          <Slot $w={22}><svg width="10" height="9"><path d="M1 7q1-3 3-2t0 3-3-1M4 5l4-4M6 4q2-1 2 1T6 7M7 0l2 2" fill="none" stroke="#ddd" strokeWidth=".9" /></svg></Slot>
          <Slot $w={18}>ENG</Slot>
          <Clock>05:53 PM<br />04-04-2020</Clock>
          <Slot $w={29}><svg width="14" height="13"><path d="M1 1h9v7H5L3 10V8H1z" fill="#f0f0f0" /><path d="M3 3.500h5M3 5.500h5" stroke="#555" strokeWidth=".7" /><circle cx="9" cy="8.500" r="3.700" fill="#2b3446" stroke="#b9bfc8" strokeWidth=".7" /><text x="7.400" y="10.700" fontSize="6" fill="#fff">4</text></svg></Slot>
        </Tray>
      </Taskbar>

      <Keyboard>
        <Rows>
          {keyRows.map((r, i) => <Row key={i}>{r.map((k, j) => <Key key={j} k={k} />)}</Row>)}
          <Row>
            {([["Ctrl", 40.5], ["Fn", 40.5], ["Win", S], ["Alt", S], ["Space", 192], ["Alt", S], ["Ctrl", S]] as K[]).map((k, j) => <Key key={j} k={k} />)}
            <Arrows>
              <ArrowKey $c="1/2">ʌ</ArrowKey><ArrowKey $c="2/1">&lt;</ArrowKey><ArrowKey $c="2/2">v</ArrowKey><ArrowKey $c="2/3">&gt;</ArrowKey>
            </Arrows>
          </Row>
        </Rows>
        <Pad>{padKeys.map((k, i) => <Key key={i} k={k} />)}</Pad>
      </Keyboard>
    </Page>
  );
}
